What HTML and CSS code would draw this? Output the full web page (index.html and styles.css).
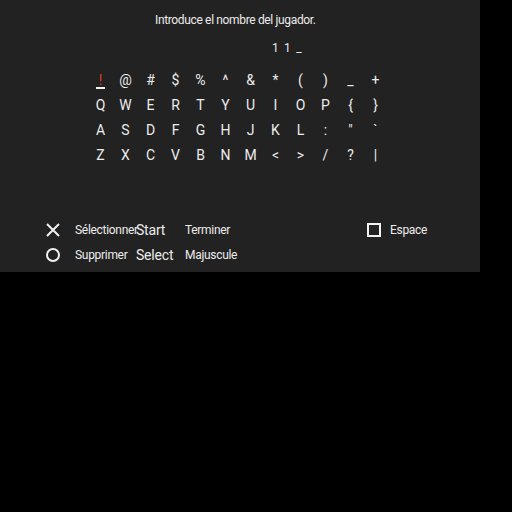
FILE: index.html
```html
<!DOCTYPE html>
<html>
<head>
<meta charset="utf-8">
<link rel="stylesheet" href="styles.css">
</head>
<body>
<div class="screen">
  <div class="title">Introduce el nombre del jugador.</div>
  <div class="name">1 1 _</div>
  <div class="keys">
    <span class="key sel">!</span><span class="key">@</span><span class="key">#</span><span class="key">$</span><span class="key">%</span><span class="key">^</span><span class="key">&amp;</span><span class="key">*</span><span class="key">(</span><span class="key">)</span><span class="key">_</span><span class="key">+</span>
    <span class="key">Q</span><span class="key">W</span><span class="key">E</span><span class="key">R</span><span class="key">T</span><span class="key">Y</span><span class="key">U</span><span class="key">I</span><span class="key">O</span><span class="key">P</span><span class="key">{</span><span class="key">}</span>
    <span class="key">A</span><span class="key">S</span><span class="key">D</span><span class="key">F</span><span class="key">G</span><span class="key">H</span><span class="key">J</span><span class="key">K</span><span class="key">L</span><span class="key">:</span><span class="key">"</span><span class="key">`</span>
    <span class="key">Z</span><span class="key">X</span><span class="key">C</span><span class="key">V</span><span class="key">B</span><span class="key">N</span><span class="key">M</span><span class="key">&lt;</span><span class="key">&gt;</span><span class="key">/</span><span class="key">?</span><span class="key">|</span>
  </div>
  <div class="help">
    <div class="hrow">
      <span class="icon"><svg width="16" height="16" viewBox="0 0 16 16"><path d="M2 2 L14 14 M14 2 L2 14" stroke="#f2f2f2" stroke-width="2" fill="none"/></svg></span>
      <span class="lbl">Sélectionner</span>
      <span class="btn">Start</span>
      <span class="lbl">Terminer</span>
      <span class="spacer"></span>
      <span class="icon sq"><svg width="16" height="16" viewBox="0 0 16 16"><rect x="2" y="2" width="12" height="12" stroke="#f2f2f2" stroke-width="2" fill="none"/></svg></span>
      <span class="lbl">Espace</span>
    </div>
    <div class="hrow">
      <span class="icon"><svg width="16" height="16" viewBox="0 0 16 16"><circle cx="8" cy="8" r="6" stroke="#f2f2f2" stroke-width="2" fill="none"/></svg></span>
      <span class="lbl">Supprimer</span>
      <span class="btn">Select</span>
      <span class="lbl">Majuscule</span>
    </div>
  </div>
</div>
</body>
</html>
```
FILE: styles.css
```css
html, body {
  margin: 0;
  padding: 0;
  background: #000;
}
body {
  width: 512px;
  height: 512px;
  font-family: Roboto, "Liberation Sans", sans-serif;
  color: #ececec;
}
.screen {
  width: 480px;
  height: 272px;
  background: #222222;
  display: flex;
  flex-direction: column;
}
.title {
  font-size: 12px;
  line-height: 14px;
  letter-spacing: -0.35px;
  margin-top: 13px;
  padding-left: 155px;
  white-space: nowrap;
}
.name {
  font-size: 12px;
  line-height: 14px;
  letter-spacing: 1.2px;
  margin-top: 14px;
  padding-left: 272px;
  white-space: pre;
}
.keys {
  margin-top: 13px;
  margin-left: 88px;
  display: grid;
  grid-template-columns: repeat(12, 25px);
  grid-auto-rows: 25px;
}
.key {
  font-size: 14px;
  text-align: center;
  line-height: 25px;
}
.key.sel {
  color: #d4401e;
  position: relative;
}
.key.sel::after {
  content: "";
  position: absolute;
  left: 8px;
  width: 9px;
  top: 19px;
  height: 2px;
  background: #f2f2f2;
}
.help {
  margin-top: 49px;
  display: flex;
  flex-direction: column;
}
.hrow {
  display: flex;
  align-items: center;
  height: 25px;
  padding-left: 45px;
}
.icon {
  width: 30px;
  display: flex;
  align-items: center;
}
.lbl {
  font-size: 12px;
  letter-spacing: -0.3px;
  width: 61px;
  white-space: nowrap;
}
.btn {
  font-size: 14px;
  letter-spacing: -0.2px;
  width: 49px;
  white-space: nowrap;
}
.spacer {
  flex: 1;
}
.sq {
  width: 24px;
}
.hrow .lbl:last-child {
  width: 90px;
}
```
